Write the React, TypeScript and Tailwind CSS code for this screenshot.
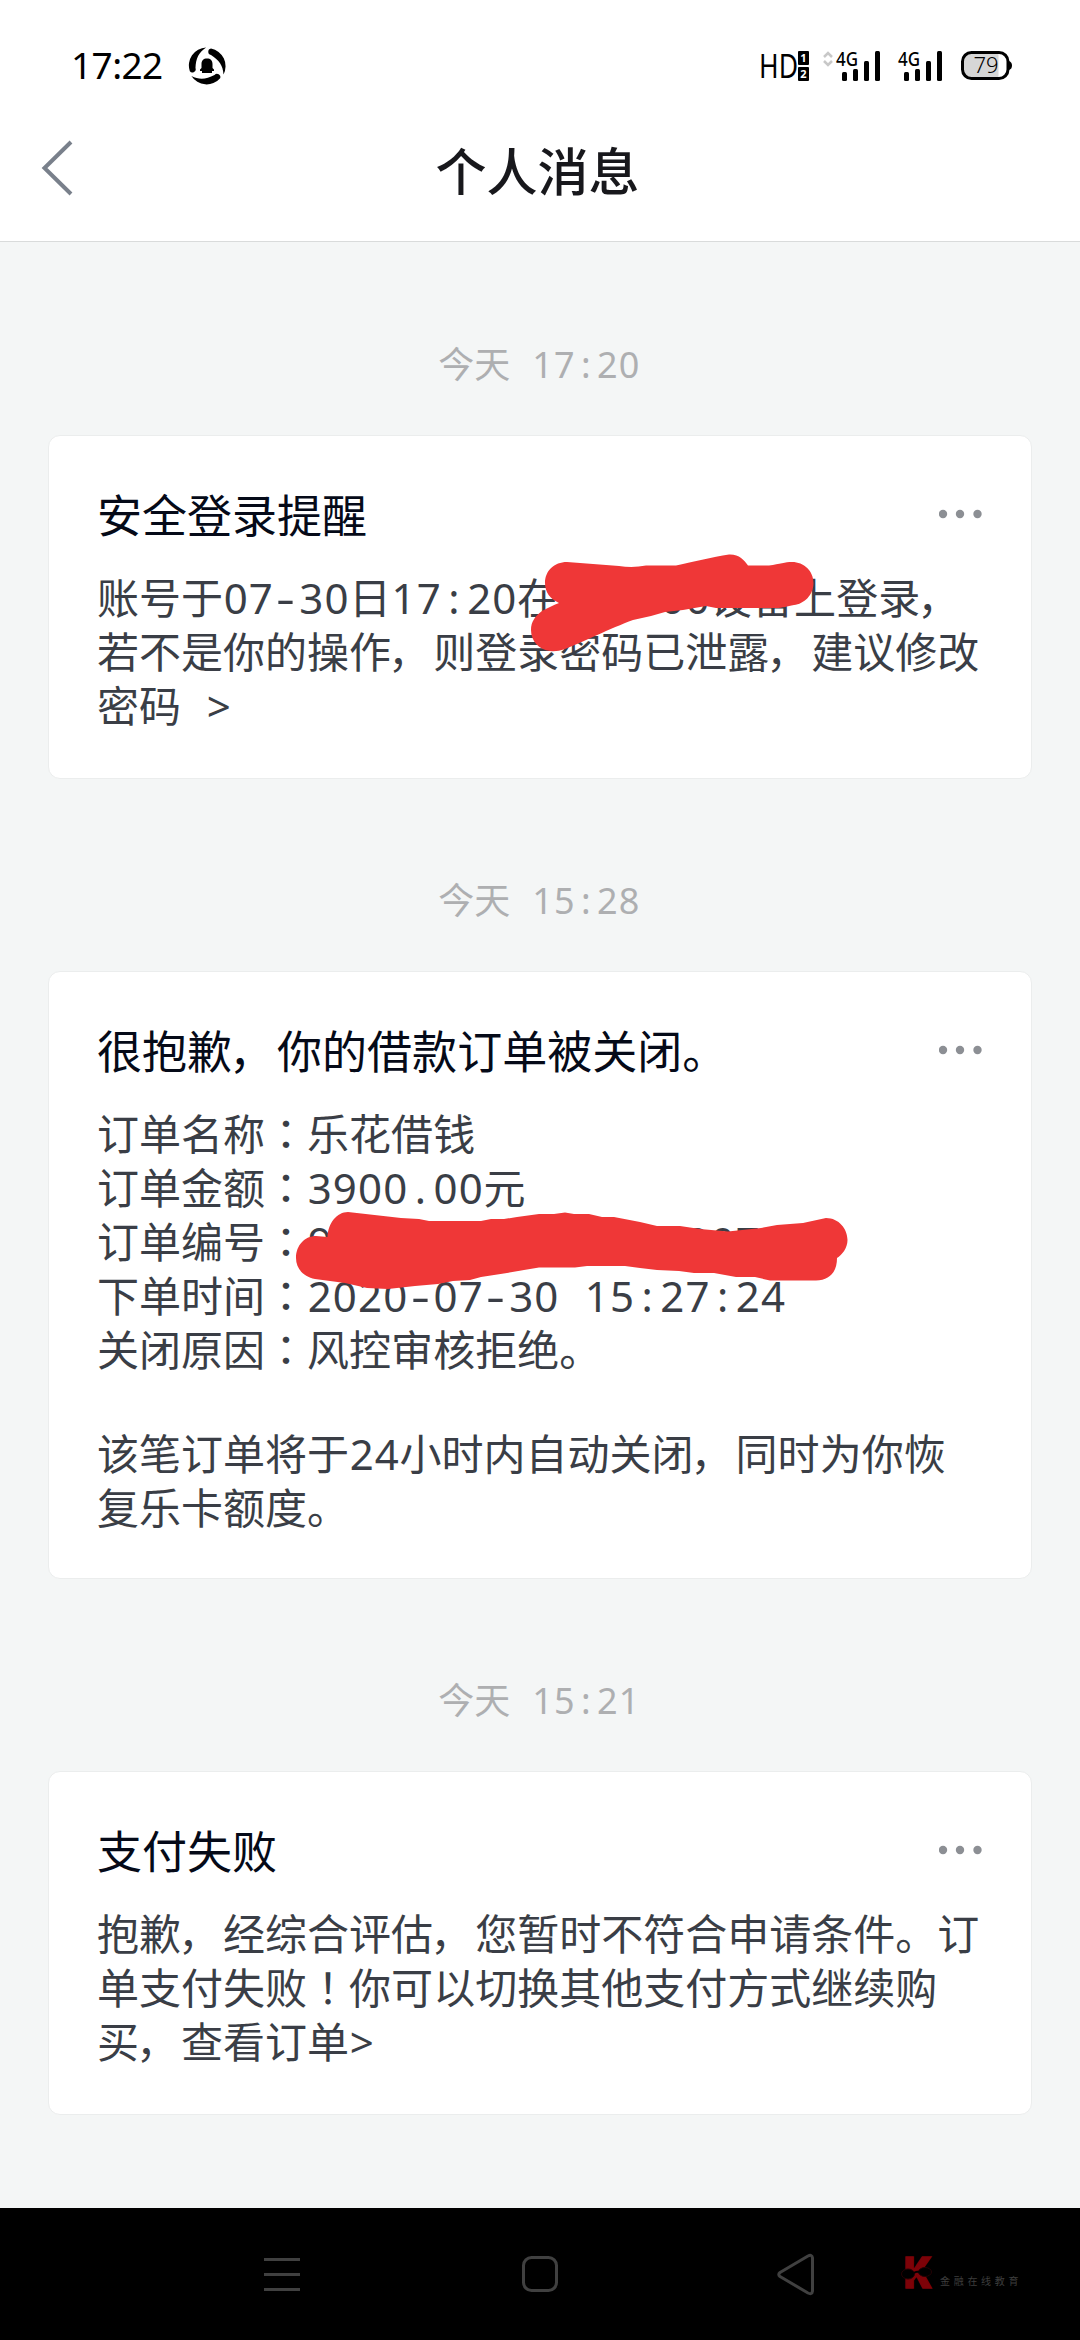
import React from "react";

interface Message {
  time: string;
  title: string;
  paragraphs: string[][];
  className: string;
}

const messages: Message[] = [
  {
    time: "今天 17:20",
    title: "安全登录提醒",
    paragraphs: [["账号于07-30日17:20在    00设备上登录，", "若不是你的操作，则登录密码已泄露，建议修改", "密码 >"]],
    className: "h-[344px]",
  },
  {
    time: "今天 15:28",
    title: "很抱歉，你的借款订单被关闭。",
    paragraphs: [
      ["订单名称：乐花借钱", "订单金额：3900.00元", "订单编号：9              207", "下单时间：2020-07-30 15:27:24", "关闭原因：风控审核拒绝。"],
      ["该笔订单将于24小时内自动关闭，同时为你恢", "复乐卡额度。"],
    ],
    className: "h-[608px]",
  },
  {
    time: "今天 15:21",
    title: "支付失败",
    paragraphs: [["抱歉，经综合评估，您暂时不符合申请条件。订", "单支付失败！你可以切换其他支付方式继续购", "买，查看订单>"]],
    className: "h-[344px]",
  },
];

// latin characters sit in fixed 0.6em cells, CJK keeps its natural width
const MixedText: React.FC<{ text: string }> = ({ text }) => (
  <>
    {text.split("").map((char, index) => {
      if (char === "-") {
        return (
          <span key={index} className="inline-block w-[0.6em] scale-x-140 text-center">
            {char}
          </span>
        );
      }
      if (char.charCodeAt(0) < 128) {
        return (
          <span key={index} className="inline-block w-[0.6em] text-center whitespace-pre">
            {char}
          </span>
        );
      }
      if (char === "：" || char === "！") {
        return (
          <span key={index} lang="ja" className="font-['Noto_Sans_CJK_JP',sans-serif] leading-[0]">
            {char}
          </span>
        );
      }
      if (char === "，") {
        return (
          <span key={index} className="-ml-[3px] mr-[3px]">
            {char}
          </span>
        );
      }
      return <React.Fragment key={index}>{char}</React.Fragment>;
    })}
  </>
);

const Signal: React.FC = () => (
  <svg className="overflow-visible" width="46" height="32" viewBox="0 0 46 32">
    <text x="0" y="15.5" fontSize="20" fontWeight="500" textLength="22" lengthAdjust="spacingAndGlyphs" className="font-['Noto_Sans',sans-serif]">
      4G
    </text>
    <rect x="6" y="22" width="5" height="9" rx="1.5" />
    <rect x="17" y="19" width="5" height="12" rx="1.5" />
    <rect x="28" y="11" width="5" height="20" rx="1.5" />
    <rect x="39" y="1" width="5" height="30" rx="1.5" />
  </svg>
);

const StatusBar: React.FC = () => (
  <div className="flex h-[132px] items-center pl-[71px] pr-[68px] text-black">
    <span className="-mt-[3px] w-[91px] text-[37px] leading-none tracking-[-0.6px]">17:22</span>
    <svg className="ml-[26px]" width="38" height="38" viewBox="-19 -19 38 38">
      {[0, 120, 240].map((angle) => (
        <path key={angle} transform={`rotate(${angle})`} d="M4-17.500A18 18 0 0 1 16.500 8.500C16-0.500 12-6 4-11A3.300 3.300 0 0 1 4-17.500Z" />
      ))}
      <path d="M-5.500 2V-2C-5.500-5.500-3.500-7.500 0-7.500S5.500-5.500 5.500-2V2L7 3.500V5H5V7H-5V5H-7V3.500Z" />
    </svg>
    <div className="ml-auto flex items-center">
      <svg className="overflow-visible" width="50" height="32" viewBox="0 0 50 32">
        <text x="-1" y="27.500" fontSize="33.500" textLength="39" lengthAdjust="spacingAndGlyphs" className="font-['Noto_Sans',sans-serif]">
          HD
        </text>
        <rect x="38" y="1" width="11" height="14" rx="1" />
        <rect x="38" y="17" width="11" height="14" rx="1" />
        <text x="43.500" y="12" fontSize="11" fontWeight="700" textAnchor="middle" fill="#fff" className="font-['Noto_Sans',sans-serif]">
          1
        </text>
        <text x="43.500" y="28" fontSize="11" fontWeight="700" textAnchor="middle" fill="#fff" className="font-['Noto_Sans',sans-serif]">
          2
        </text>
      </svg>
      <svg className="ml-[13px] mr-[3px]" width="10" height="32" viewBox="0 0 10 32" fill="none" stroke="#c8c8c8" strokeWidth="2.500">
        <path d="M1 7L5 3L9 7M1 11L5 15L9 11" />
      </svg>
      <Signal />
      <div className="ml-4 mr-[17px] flex">
        <Signal />
      </div>
      <svg width="51" height="32" viewBox="0 0 51 32">
        <path d="M12 3H37.500V28H12Q2 28 2 18V12Q2 3 12 3Z" fill="#d6d6d6" />
        <rect x="1.500" y="2.500" width="45.500" height="26" rx="9" fill="none" stroke="#000" strokeWidth="3" />
        <path d="M48 11Q51 12 51 15.500T48 20Z" />
        <text x="12.500" y="23" fontSize="22" fontWeight="300" textLength="25" fill="#000" className="font-['Noto_Sans',sans-serif]">
          79
        </text>
      </svg>
    </div>
  </div>
);

const Header: React.FC = () => (
  <div className="grid h-[110px] grid-cols-[200px_1fr_200px] border-b border-[#d9dbdb]">
    <svg className="ml-[40px] mt-[7px]" width="36" height="60" viewBox="0 0 36 60" fill="none" stroke="#79808b" strokeWidth="4">
      <path d="M31 3L4.500 29L31 55" />
    </svg>
    <h1 className="-ml-[5px] pt-[7px] text-center text-[51px] font-medium leading-[64px] text-[#18181c]">个人消息</h1>
  </div>
);

const LoginScribble: React.FC = () => (
  <svg className="absolute left-[478px] top-[112px]" width="290" height="110" viewBox="526 548 290 110">
    <path
      fill="#ef3737"
      d="M566 562L618 566Q632 568 645 565.500H675C690 562 712 557 728 554.500C738 554 743 560 747 565.500H768C779 564 784 562 791 562C803 562 812.500 571 812.500 583C812.500 595 803 604 793 605C786 606 782 608 775 608H715L705 606L682 610L664 612L650 616L632 620C610 628 580 643 564 649C558 651 554 651.500 549 651C538 650 530 641 530 630C530 622 534 616 541 611C547 608 552 605 558 603C549 599 544 592 544 583C544 571 553 562 566 562Z"
    />
  </svg>
);

const OrderScribble: React.FC = () => (
  <svg className="absolute left-[243px] top-[236px]" width="564" height="86" viewBox="292 1208 564 86">
    <path
      fill="#ef3737"
      d="M348 1212L401 1218L419 1219L429 1221H481L491 1219L504 1219L517 1217L539 1214H554L565 1212.500L574 1214H589L602 1217H614L640 1222L657 1226H680L700 1229L728 1231.500L761 1228L777 1225L803 1223L826 1218C839 1218 847.500 1229 847.500 1240C847.500 1248 842 1255 837 1258C837 1272 830 1280 816 1280.500H770L755 1277H736L714 1273H694L679 1271L657 1270L640 1268L625 1266H587L575 1267.500H539L524 1270L507 1273L494 1275L481 1277L470 1280L453 1281L438 1284L415 1286L388 1289L367 1288L345 1283L315 1279C304 1277 296 1269 296 1258C296 1245 305 1236 316 1236L327.500 1237C328 1223 337 1212 348 1212Z"
    />
  </svg>
);

const MessageCard: React.FC<{ message: Message; children?: React.ReactNode }> = ({ message, children }) => (
  <>
    <div className="flex h-[192px] justify-center pt-[95px] text-[36px] leading-[54px] text-[#aeafb1]">
      <p className="-ml-[2px] whitespace-nowrap">
        <MixedText text={message.time} />
      </p>
    </div>
    <div className={`relative mx-[48px] rounded-xl border border-[#ebeded] bg-white px-[48px] pt-[53px] ${message.className}`}>
      <div className="flex items-center justify-between">
        <h2 className="whitespace-nowrap text-[45px] leading-[54px] text-[#050a18]">
          <MixedText text={message.title} />
        </h2>
        <svg className="-mt-[5px]" width="44" height="10" viewBox="0 0 44 10" fill="#8c8f94">
          <circle cx="4" cy="5" r="4.200" />
          <circle cx="21" cy="5" r="4.200" />
          <circle cx="38.500" cy="5" r="4.200" />
        </svg>
      </div>
      <div className="mt-[28px] flex flex-col gap-[50px] whitespace-nowrap text-[42px] leading-[54px] text-[#3a3e46]">
        {message.paragraphs.map((lines, index) => (
          <div key={index}>
            {lines.map((line) => (
              <p key={line} className="h-[54px]">
                <MixedText text={line} />
              </p>
            ))}
          </div>
        ))}
      </div>
      {children}
    </div>
  </>
);

const NavBar: React.FC = () => (
  <div className="relative flex h-[132px] items-center bg-black">
    <svg className="ml-[262px]" width="40" height="44" viewBox="0 0 40 44" stroke="#404040" strokeWidth="3">
      <path d="M2 7.500H38M2 22.500H38M2 37.500H38" />
    </svg>
    <svg className="ml-[218px]" width="40" height="44" viewBox="0 0 40 44" fill="none" stroke="#404040" strokeWidth="3">
      <rect x="3.500" y="5.500" width="33" height="33" rx="8" />
    </svg>
    <svg className="ml-[216px]" width="40" height="44" viewBox="0 0 40 44" fill="none" stroke="#404040" strokeWidth="3" strokeLinejoin="round">
      <path d="M4 20.500L32 4Q36 2 36.500 6V39Q36 43 32 41L4 24.500Q1.500 22.500 4 20.500Z" />
    </svg>
    <svg className="ml-[88px] overflow-visible" width="34" height="36" viewBox="0 0 34 36">
      <text x="0" y="32" fontSize="42" fontWeight="900" textLength="28" lengthAdjust="spacingAndGlyphs" fill="#7d0208" stroke="#7d0208" strokeWidth="1.500" className="font-['Inter',sans-serif]">
        K
      </text>
      <ellipse cx="4" cy="18" rx="6.500" ry="5" stroke="#250204" />
      <ellipse cx="21" cy="16" rx="6.500" ry="4.500" stroke="#250204" />
      <path d="M10 17Q12 15 15 16" fill="none" stroke="#000" strokeWidth="2" />
    </svg>
    <span className="ml-[2px] mt-[13px] whitespace-nowrap text-[10px] leading-none tracking-[3.7px] text-[#3d3d3d]">金融在线教育</span>
  </div>
);

export default function App() {
  return (
    <div className="flex h-[2340px] w-[1080px] flex-col overflow-hidden bg-white font-['Noto_Sans','Noto_Sans_CJK_SC',sans-serif]" lang="zh-CN">
      <StatusBar />
      <Header />
      <main className="flex-1 bg-[#f4f6f6] pt-px">
        <MessageCard message={messages[0]}>
          <LoginScribble />
        </MessageCard>
        <MessageCard message={messages[1]}>
          <OrderScribble />
        </MessageCard>
        <MessageCard message={messages[2]} />
      </main>
      <NavBar />
    </div>
  );
}
